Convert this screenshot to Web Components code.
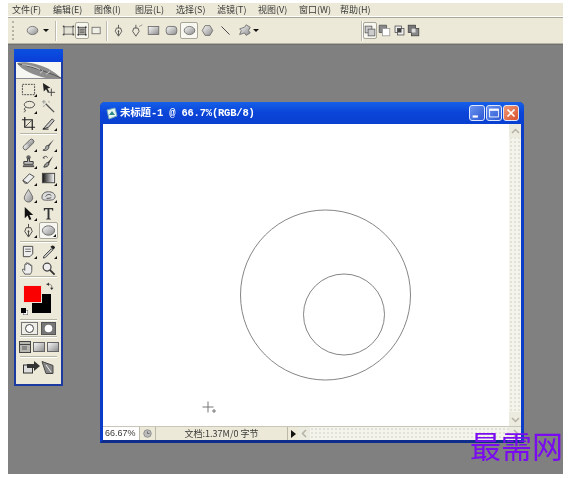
<!DOCTYPE html>
<html lang="zh">
<head>
<meta charset="utf-8">
<title>Photoshop</title>
<style>
  html, body { margin: 0; background: #fff; }
  body { width: 583px; height: 478px; overflow: hidden; font-family: "Noto Sans CJK SC", "Liberation Sans", sans-serif; }
</style>
</head>
<body>
<ps-app>
  <ps-menubar items="文件(F),编辑(E),图像(I),图层(L),选择(S),滤镜(T),视图(V),窗口(W),帮助(H)"></ps-menubar>
  <ps-options></ps-options>
  <ps-desktop>
    <ps-toolbox></ps-toolbox>
    <ps-document heading="未标题-1 @ 66.7%(RGB/8)"></ps-document>
    <ps-watermark>最需网</ps-watermark>
  </ps-desktop>
</ps-app>

<script>
const grad = `<defs>
  <linearGradient id="g" x1="0" y1="0" x2="1" y2="1"><stop offset="0" stop-color="#fafafa"/><stop offset="1" stop-color="#8b8b8b"/></linearGradient>
  <linearGradient id="h" x1="0" y1="0" x2="1" y2="0"><stop offset="0" stop-color="#111"/><stop offset="1" stop-color="#fff"/></linearGradient>
</defs>`;
const line = 'fill="none" stroke="#444" stroke-width="1"';
const soft = 'fill="url(#g)" stroke="#666" stroke-width="1"';
const ICONS = {
  ellipse: `<ellipse cx="8" cy="8" rx="6.500" ry="5" ${soft}/>`,
  rect: `<rect x="1.500" y="3" width="13" height="10" ${soft}/>`,
  rrect: `<rect x="1.500" y="3" width="13" height="10" rx="3.500" ${soft}/>`,
  poly: `<path d="M5 2h6l3.500 6L11 14H5L1.500 8z" ${soft}/>`,
  lineTool: `<path d="M3 3l10 10" stroke="#444" stroke-width="1.200"/>`,
  custom: `<path d="M10 1l5 3-2 4 2 3-5 3-2-3-6 2 2-5-2-2 6-2z" ${soft}/>`,
  layerShape: `<rect x="2.500" y="3.500" width="11" height="9" fill="#e4e2d4" stroke="#555"/><rect x="1" y="2" width="2" height="2" fill="#444"/><rect x="13" y="2" width="2" height="2" fill="#444"/><rect x="1" y="12" width="2" height="2" fill="#444"/><rect x="13" y="12" width="2" height="2" fill="#444"/>`,
  layerPath: `<rect x="3" y="3" width="10" height="10" fill="#a9a9a2" stroke="#444"/><path d="M5 6h6M5 8h6M5 10h6" stroke="#666"/><rect x="2" y="2" width="2" height="2" fill="#333"/><rect x="12" y="2" width="2" height="2" fill="#333"/><rect x="2" y="12" width="2" height="2" fill="#333"/><rect x="12" y="12" width="2" height="2" fill="#333"/>`,
  fillPix: `<rect x="2.500" y="4" width="10" height="8" fill="#f0efe6" stroke="#666"/>`,
  pen: `<path d="M8 1v4M5.500 5h5L12 9l-4 6-4-6zM8 8v6" ${line}/><circle cx="8" cy="9" r="1" fill="#444"/>`,
  freepen: `<path d="M6 1v4M3.500 5h5L10 9l-4 6-4-6z" ${line}/><path d="M10 3l4-2" stroke="#888"/>`,
  marquee: `<rect x="1.500" y="2.500" width="13" height="11" fill="none" stroke="#444" stroke-dasharray="2 1"/>`,
  move: `<path d="M2 1l8 5-3.200 .8 2 3.200-1.500 1-2-3.300L3 10z" fill="#222"/><path d="M11 7v8M7 11h8" stroke="#444"/>`,
  lasso: `<ellipse cx="9" cy="6" rx="5.500" ry="3.500" ${line}/><path d="M5 9c-2 1-2 3 0 3-1 1-1 2-2 2" ${line}/>`,
  wand: `<path d="M5 5l9 9" stroke="#555" stroke-width="1.500"/><path d="M3 1v4M1 3h4M8 2l1 2M2 8l2-1" stroke="#999"/>`,
  crop: `<path d="M4 1v11h11M1 4h11v11" fill="none" stroke="#222" stroke-width="1.300"/><path d="M4 12l8-8" stroke="#555"/>`,
  slice: `<path d="M2 14L12 3l2 2-6 7z" fill="#ccc" stroke="#333"/><path d="M2 14h6" stroke="#222"/>`,
  heal: `<rect x="1" y="5.500" width="14" height="5" rx="2.500" transform="rotate(-45 8 8)" ${soft}/><path d="M6.500 8l3-3M8 9.500l3-3" stroke="#888"/>`,
  brush: `<path d="M14 2L7 9l1.500 1.500z" fill="#555"/><path d="M7 9c-2 0-2 2-2 2.500s-1 2-3 2.500c3 1 6 0 6.500-3.500z" fill="#aaa" stroke="#444"/>`,
  stamp: `<circle cx="8" cy="3.500" r="2.300" fill="#666"/><path d="M7 5h2v3h4v3H3V8h4z" fill="#bbb" stroke="#333"/><rect x="2" y="12" width="12" height="2" fill="#555"/>`,
  history: `<path d="M13 2L7 9l1.500 1.500z" fill="#333"/><path d="M7 9c-2 1-3 2-4 5 3 0 5-1 5.500-3.500z" fill="#999" stroke="#333"/><path d="M2 4c2-2 4-2 5 0M2 4l2 .5" ${line}/>`,
  eraser: `<path d="M2 10L9 3l5 3-7 7H4z" fill="#eee" stroke="#444"/><path d="M2 10l5 3" stroke="#444"/>`,
  gradient: `<rect x="1.500" y="2.500" width="13" height="10" fill="url(#h)" stroke="#444"/>`,
  blur: `<path d="M8 1.500C6 5.500 3.500 8 3.500 10.500a4.500 4.500 0 0 0 9 0C12.500 8 10 5.500 8 1.500z" ${soft}/>`,
  sponge: `<path d="M1 10c0-4 3-6 7-6s7 2 7 5-2 4-7 4-7 0-7-3z" fill="#ddd" stroke="#555"/><path d="M5 9c1-2 4-3 6-1M6 11c2 0 4 0 5-1" ${line}/>`,
  arrow: `<path d="M4 1v12l3-3 2 5 2-1-2-4.500h4z" fill="#111"/>`,
  type: `<path d="M3 2h10v3h-.8l-.8-1.500H9V13l1.500 .8v.7h-5v-.7L7 13V3.500H4.600L3.800 5H3z" fill="#333"/>`,
  note: `<path d="M2.500 2.500h10v8l-3 3h-7z" fill="#eee" stroke="#444"/><path d="M4.500 5.500h6M4.500 8h6" stroke="#666"/>`,
  eyedrop: `<path d="M3 13l8-8 1.500 1.500-8 8-2 .5z" fill="#ccc" stroke="#444"/><path d="M10 3l3 3 2-2-1-2-2-.5z" fill="#222"/>`,
  hand: `<path d="M4 14c-1-2-3-4-2.500-5s2 0 2.500 1V4c0-1 1.500-1 1.500 0V2.500c0-1 1.500-1 1.500 0V3c0-1 1.500-1 1.500 0v1c0-1 1.500-1 1.500 0v1c0-1 1.500-1 1.500 0v5c0 2-1 3-1.500 4z" fill="#eee" stroke="#444" stroke-width=".9"/>`,
  zoom: `<circle cx="6.500" cy="6.500" r="4.200" fill="#eee" stroke="#444" stroke-width="1.300"/><path d="M9.500 9.500l5 5" stroke="#333" stroke-width="2"/>`,
  stdmode: `<rect x=".5" y=".5" width="16" height="12" fill="#efeee6" stroke="#777"/><circle cx="8.500" cy="6.500" r="4" fill="#fff" stroke="#444"/>`,
  qmask: `<rect x=".5" y=".5" width="14" height="12" fill="#777" stroke="#555"/><circle cx="7.500" cy="6.500" r="3.800" fill="#fff"/>`,
  screen1: `<rect x=".5" y=".5" width="11" height="11" fill="#b8b8b0" stroke="#444"/><path d="M.5 3.500h11" stroke="#444"/><rect x="3" y="5" width="5" height="4" fill="#888"/>`,
  screen2: `<rect x=".5" y="1.500" width="11" height="9" ${soft}/>`,
  jump: `<rect x=".5" y="4" width="9" height="8" fill="#ddd" stroke="#333"/><path d="M4 3h7V0l6 5-6 5V7H4z" fill="#333"/>`,
  jump2: `<path d="M1 .5l11 4v8H5z" fill="#888" stroke="#444"/><path d="M5 4l5 7" stroke="#eee"/>`,
  ops1: `<rect x="1.500" y="1.500" width="9" height="9" fill="#ccc" stroke="#555"/><rect x="5.500" y="5.500" width="9" height="9" fill="#ccc" stroke="#555"/>`,
  ops2: `<path d="M1.500 1.500h9v4h-5v5h-4z" fill="#888" stroke="#555"/><rect x="5.500" y="5.500" width="9" height="9" fill="#fff" stroke="#999"/>`,
  ops3: `<rect x="2.500" y="2.500" width="8" height="8" fill="#eee" stroke="#555"/><rect x="5.500" y="5.500" width="8" height="8" fill="#eee" stroke="#555"/><rect x="5.500" y="5.500" width="5" height="5" fill="#444"/>`,
  ops4: `<rect x="1.500" y="1.500" width="9" height="9" fill="#777" stroke="#444"/><rect x="5.500" y="5.500" width="9" height="9" fill="#888" stroke="#444"/><rect x="5.500" y="5.500" width="5" height="5" fill="#ddd"/>`,
  feather: `<path d="M1 1C10-1 22 2 32 7c5 3 9 6 13 10H30C18 14 6 9 1 1z" fill="#8d8d8d"/><path d="M2 2c10 2 26 7 43 15" stroke="#555" fill="none"/><path d="M6 3c6 0 13 2 18 5M30 13l4-3M24 12l3-3" stroke="#cfcfcf" fill="none"/>`,
  cycle: `<circle cx="8" cy="8" r="5.500" fill="#bbb" stroke="#777"/><path d="M8 5v3h3" stroke="#555" fill="none"/>`,
  swap: `<path d="M2 4h7l3 3v5" fill="none" stroke="#333"/><path d="M7 1v6l-4-3zM9 10h6l-3 4z" fill="#333"/>`
};

class PsIcon extends HTMLElement {
  connectedCallback() {
    const size = this.getAttribute("size") || 16;
    const vb = this.getAttribute("viewbox") || "0 0 16 16";
    this.attachShadow({ mode: "open" }).innerHTML = `
      <style>:host{display:block;flex:none;width:${size}px;height:${this.getAttribute("h") || size}px} svg{display:block;width:100%;height:100%}</style>
      <svg viewBox="${vb}" preserveAspectRatio="none">${grad}${ICONS[this.getAttribute("name")]}</svg>`;
  }
}
customElements.define("ps-icon", PsIcon);

class PsApp extends HTMLElement {
  constructor() {
    super();
    this.attachShadow({ mode: "open" }).innerHTML = `
      <style>
        :host{display:flex;flex-direction:column;width:555px;height:471px;margin:3px 0 0 8px;filter:blur(.35px)}
      </style><slot></slot>`;
  }
}
customElements.define("ps-app", PsApp);

class PsMenubar extends HTMLElement {
  connectedCallback() {
    const items = this.getAttribute("items").split(",");
    this.attachShadow({ mode: "open" }).innerHTML = `
      <style>
        :host{display:flex;height:14px;padding-left:4px;background:#ece9d8;border-bottom:1px solid #a9a798;box-shadow:inset 0 -1px 0 #fff;flex:none}
        span{width:41px;flex:none;font:9px/13px "Noto Sans CJK SC","Liberation Sans",sans-serif;color:#3a3a38;white-space:nowrap}
      </style>${items.map(t => `<span>${t}</span>`).join("")}`;
  }
}
customElements.define("ps-menubar", PsMenubar);

class PsOptions extends HTMLElement {
  connectedCallback() {
    const btn = (n, on, w = 14) => `<span class="b${on ? " on" : ""}" style="width:${w}px"><ps-icon name="${n}" size="${on && w == 14 ? 12 : 13}"></ps-icon></span>`;
    this.attachShadow({ mode: "open" }).innerHTML = `
      <style>
        :host{display:flex;align-items:center;height:25px;flex:none;padding-left:4px;background:#ece9d8;border-bottom:1px solid #b5b3a5}
        .grip{width:1px;height:19px;margin-right:9px;border-left:2px dotted #b5b3a5}
        .b{display:flex;align-items:center;justify-content:center;height:17px;box-sizing:border-box;flex:none}
        .on{background:#f8f7f0;border:1px solid #a8a698;border-radius:2px}
        .sep{width:1px;height:20px;background:#bdbbad;box-shadow:1px 0 #fff;flex:none}
        .tri{width:0;height:0;border:3px solid transparent;border-top:3px solid #111;border-bottom:0;flex:none}
        .grp{display:flex;align-items:center;flex:none}
      </style>
      <div class="grip"></div>
      ${btn("ellipse", 0, 16)}
      <span class="tri" style="margin-left:3px"></span>
      <div class="sep" style="margin:0 5px 0 6px"></div>
      <div class="grp">${btn("layerShape")}${btn("layerPath", 1)}${btn("fillPix")}</div>
      <div class="sep" style="margin:0 4px 0 3px"></div>
      <div class="grp">${btn("pen")}<span style="width:5px"></span>${btn("freepen")}${btn("rect", 0, 18)}${btn("rrect", 0, 18)}${btn("ellipse", 1, 18)}${btn("poly", 0, 18)}${btn("lineTool", 0, 18)}<span style="width:1px"></span>${btn("custom", 0, 18)}</div>
      <span class="tri"></span>
      <div class="sep" style="margin-left:102px;margin-right:1px"></div>
      <div class="grp">${btn("ops1", 1)}${btn("ops2", 0, 15)}${btn("ops3", 0, 14)}${btn("ops4", 0, 15)}</div>`;
  }
}
customElements.define("ps-options", PsOptions);

class PsDesktop extends HTMLElement {
  constructor() {
    super();
    this.attachShadow({ mode: "open" }).innerHTML = `
      <style>:host{display:block;position:relative;flex:1;background:#808080;border-top:1px solid #70706c}</style><slot></slot>`;
  }
}
customElements.define("ps-desktop", PsDesktop);

class PsTool extends HTMLElement {
  connectedCallback() {
    const more = this.hasAttribute("more") ? '<i></i>' : "";
    this.attachShadow({ mode: "open" }).innerHTML = `
      <style>
        :host{display:flex;align-items:center;justify-content:center;position:relative;width:19px;height:17px;box-sizing:border-box}
        :host([on]){background:#f7f6f0;border:1px solid #a8a698;border-radius:2px}
        i{position:absolute;right:1px;bottom:1px;width:0;height:0;border-left:3px solid transparent;border-bottom:3px solid #111}
      </style><ps-icon name="${this.getAttribute("name")}" size="15"></ps-icon>${more}`;
  }
}
customElements.define("ps-tool", PsTool);

class PsToolbox extends HTMLElement {
  connectedCallback() {
    const t = (n, more = 1, on = 0) => `<ps-tool name="${n}"${more ? " more" : ""}${on ? " on" : ""}></ps-tool>`;
    this.attachShadow({ mode: "open" }).innerHTML = `
      <style>
        :host{position:absolute;left:6px;top:4px;width:49px;height:337px;box-sizing:border-box;display:flex;flex-direction:column;background:#ece9d8;border:2px solid #1c3aa0;border-top:0}
        .bar{height:13px;flex:none;background:linear-gradient(#0a50e0,#0a3ed8);margin:0 -2px}
        .logo{height:17px;flex:none;background:#f6f6f2;overflow:hidden;border-bottom:1px solid #8a8a90;box-sizing:border-box}
        .g{display:grid;grid-template-columns:19px 19px;justify-content:center;column-gap:1px;flex:none}
        .sep{height:1px;margin:2px 4px;background:#b7b5a6;box-shadow:0 1px #fff;flex:none}
        .color{position:relative;height:34px;flex:none;margin-top:6px}
        .fg{position:absolute;left:7px;top:0;width:19px;height:18px;background:#fb0000;border:1px solid #e8e0d0;box-sizing:border-box;z-index:1}
        .bgc{position:absolute;left:16px;top:9px;width:19px;height:19px;background:#000}
        .mini{position:absolute;left:5px;top:23px;width:5px;height:5px;background:#000;box-shadow:2px 2px 0 -.5px #fff,2px 2px 0 0 #555}
        .swap{position:absolute;left:29px;top:-3px}
        .row{display:flex;justify-content:center;flex:none}
      </style>
      <div class="bar"></div>
      <div class="logo"><ps-icon name="feather" size="45" h="16" viewbox="0 0 45 17"></ps-icon></div>
      <div class="g" style="margin-top:2px">${t("marquee")}${t("move", 0)}${t("lasso")}${t("wand", 0)}${t("crop", 0)}${t("slice")}</div>
      <div class="sep" style="margin-top:1px"></div>
      <div class="g">${t("heal")}${t("brush")}${t("stamp")}${t("history")}${t("eraser")}${t("gradient")}${t("blur")}${t("sponge")}</div>
      <div class="g" style="margin-top:1px">${t("arrow")}${t("type", 0)}${t("pen")}${t("ellipse", 1, 1)}</div>
      <div class="sep" style="margin-bottom:1px"></div>
      <div class="g" style="grid-auto-rows:16.500px">${t("note")}${t("eyedrop")}${t("hand", 0)}${t("zoom", 0)}</div>
      <div class="sep" style="margin-top:0"></div>
      <div class="color">
        <div class="fg"></div><div class="bgc"></div><div class="mini"></div>
        <ps-icon class="swap" name="swap" size="9"></ps-icon>
      </div>
      <div class="sep" style="margin-top:0"></div>
      <div class="row" style="gap:3px"><ps-icon name="stdmode" size="17" h="13" viewbox="0 0 17 13"></ps-icon><ps-icon name="qmask" size="15" h="13" viewbox="0 0 15 13"></ps-icon></div>
      <div class="sep" style="margin-top:1px;margin-bottom:4px"></div>
      <div class="row" style="gap:2px"><ps-icon name="screen1" size="12" viewbox="0 0 12 12"></ps-icon><ps-icon name="screen2" size="12" viewbox="0 0 12 12"></ps-icon><ps-icon name="screen2" size="12" viewbox="0 0 12 12"></ps-icon></div>
      <div class="sep" style="margin-top:3px"></div>
      <div class="row" style="margin-top:2px"><ps-icon name="jump" size="18" h="13" viewbox="0 0 18 13"></ps-icon><ps-icon name="jump2" size="13" viewbox="0 0 13 13"></ps-icon></div>`;
  }
}
customElements.define("ps-toolbox", PsToolbox);

class PsWinButton extends HTMLElement {
  connectedCallback() {
    const kind = this.getAttribute("kind");
    const glyph = {
      min: `<path d="M3 12h6" stroke="#fff" stroke-width="2.500"/>`,
      max: `<rect x="3" y="3.500" width="10" height="9" fill="none" stroke="#fff"/><path d="M3 4.500h10" stroke="#fff" stroke-width="2"/>`,
      close: `<path d="M4 4l8 8M12 4l-8 8" stroke="#fff" stroke-width="2"/>`
    }[kind];
    const bg = kind === "close" ? "linear-gradient(135deg,#ef9a78,#d9502c)" : "linear-gradient(135deg,#6c94ee,#2c58d4)";
    this.attachShadow({ mode: "open" }).innerHTML = `
      <style>
        :host{display:block;width:16px;height:16px;box-sizing:border-box;border:1px solid #dfe8fa;border-radius:3px;background:${bg}}
        svg{display:block;width:14px;height:14px}
      </style><svg viewBox="0 0 16 16">${glyph}</svg>`;
  }
}
customElements.define("ps-winbutton", PsWinButton);

class PsDocument extends HTMLElement {
  connectedCallback() {
    const dots = "background-color:#f5f4ec;background-image:radial-gradient(#e2e1d4 .7px,transparent .8px);background-size:4px 4px";
    const chev = d => `<svg width="9" height="7" viewBox="0 0 9 7"><path d="${d}" fill="none" stroke="#b4b2a4" stroke-width="1.500"/></svg>`;
    this.attachShadow({ mode: "open" }).innerHTML = `
      <style>
        :host{position:absolute;left:92px;top:57px;width:424px;height:341px;box-sizing:border-box;display:flex;flex-direction:column;background:#0a3cc8;border:3px solid #0a3cc8;border-top:0;border-bottom-color:#0d2c8c;border-radius:5px 5px 0 0}
        .title{display:flex;align-items:center;height:22px;flex:none;background:linear-gradient(#1560ea,#0a44d8 50%,#0a40d0);margin:0 -3px;padding:0 5px 0 6px;border-radius:5px 5px 0 0}
        .doc{width:12px;height:13px;margin-right:2px;flex:none}
        .name{flex:1;color:#fff;font:bold 10.500px/22px "Liberation Mono","Noto Sans CJK SC",monospace;white-space:nowrap;letter-spacing:-.2px}
        .btns{display:flex;gap:1px}
        .main{flex:1;display:flex;min-height:0;background:#fff}
        .canvas{flex:1;background:#fff;position:relative;min-width:0}
        .canvas svg{position:absolute;left:0;top:0;width:100%;height:100%}
        .vs{width:12px;flex:none;display:flex;flex-direction:column;justify-content:space-between;${dots}}
        .arr{height:14px;display:flex;align-items:center;justify-content:center;background:#ecebdf}
        .status{display:flex;height:14px;box-sizing:border-box;flex:none;background:#ece9d8;border-top:1px solid #c8c6b8;font:9px/13px "Noto Sans CJK SC","Liberation Sans",sans-serif;color:#3a3a38}
        .z{width:36px;background:#fff;padding-left:2px;box-sizing:border-box;font-family:"Liberation Sans",sans-serif;flex:none;white-space:nowrap}
        .c{width:17px;display:flex;align-items:center;justify-content:center;flex:none;border-left:1px solid #bbb9aa;border-right:1px solid #bbb9aa;box-sizing:border-box}
        .t{width:131px;text-align:center;flex:none;white-space:nowrap}
        .p{width:10px;display:flex;align-items:center;justify-content:center;flex:none;border-left:1px solid #bbb9aa}
        .p i{border-left:5px solid #111;border-top:4px solid transparent;border-bottom:4px solid transparent}
        .hs{flex:1;min-width:0;display:flex;justify-content:space-between;${dots}}
        .hs .arr{width:12px;height:auto}
      </style>
      <div class="title">
        <svg class="doc" viewBox="0 0 12 13"><path d="M1 3l8-2 2 8-8 3z" fill="#e8f4f0" stroke="#7ab"/><path d="M3 8l3-4 3 4z" fill="#2a8a8a"/></svg>
        <span class="name">${this.getAttribute("heading")}</span>
        <div class="btns"><ps-winbutton kind="min"></ps-winbutton><ps-winbutton kind="max"></ps-winbutton><ps-winbutton kind="close"></ps-winbutton></div>
      </div>
      <div class="main">
        <div class="canvas">
          <svg>
            <circle cx="222.500" cy="171" r="85" fill="none" stroke="#777" stroke-width=".9"/>
            <circle cx="241" cy="190.500" r="40.500" fill="none" stroke="#777" stroke-width=".9"/>
            <path d="M105 277.500v11M99.500 283h11M111 285v4M109 287h4" fill="none" stroke="#777"/>
          </svg>
        </div>
        <div class="vs"><div class="arr">${chev("M1 5l3.500-3.500L8 5")}</div><div class="arr">${chev("M1 2l3.500 3.500L8 2")}</div></div>
      </div>
      <div class="status">
        <div class="z">66.67%</div>
        <div class="c"><ps-icon name="cycle" size="11"></ps-icon></div>
        <div class="t">文档:1.37M/0 字节</div>
        <div class="p"><i></i></div>
        <div class="hs"><div class="arr"><svg width="7" height="9" viewBox="0 0 7 9"><path d="M5 1L1.500 4.500 5 8" fill="none" stroke="#b4b2a4" stroke-width="1.500"/></svg></div><div class="arr"><svg width="7" height="9" viewBox="0 0 7 9"><path d="M2 1l3.500 3.500L2 8" fill="none" stroke="#b4b2a4" stroke-width="1.500"/></svg></div></div>
      </div>`;
  }
}
customElements.define("ps-document", PsDocument);

class PsWatermark extends HTMLElement {
  constructor() {
    super();
    this.attachShadow({ mode: "open" }).innerHTML = `
      <style>:host{position:absolute;right:0;bottom:12px;font:400 31px/34px "Noto Sans CJK SC","Liberation Serif",sans-serif;color:#7a0af0;white-space:nowrap}</style><slot></slot>`;
  }
}
customElements.define("ps-watermark", PsWatermark);
</script>
</body>
</html>
